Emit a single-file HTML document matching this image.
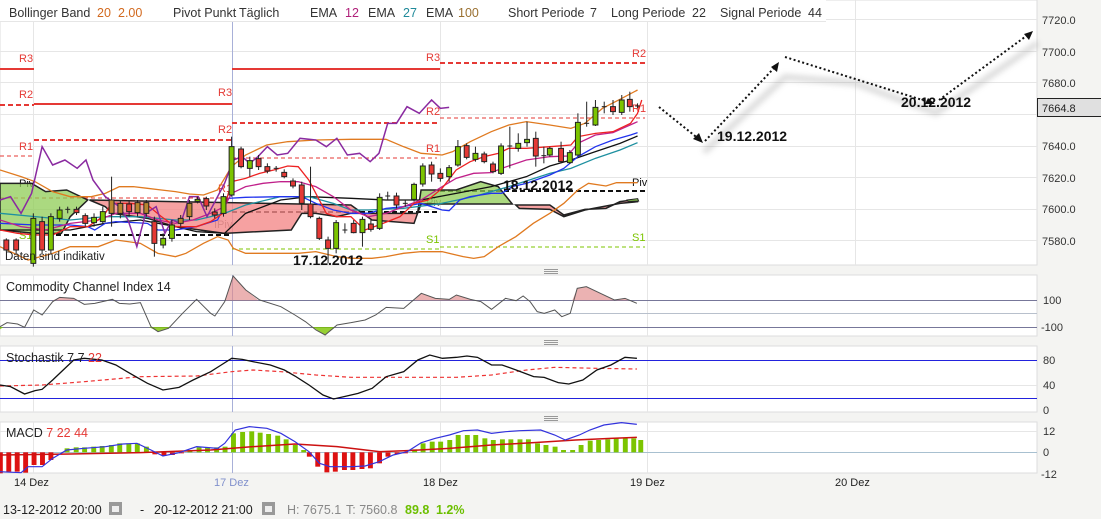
<!DOCTYPE html>
<html><head><meta charset="utf-8"><style>
html,body{margin:0;padding:0;background:#f4f4f2;}
svg{display:block;font-family:"Liberation Sans",sans-serif;}
.ns{vector-effect:non-scaling-stroke;}
</style></head><body>
<svg width="1101" height="519" viewBox="0 0 1101 519" xmlns="http://www.w3.org/2000/svg">
<defs><filter id="bl" x="-10%" y="-50%" width="120%" height="200%"><feGaussianBlur stdDeviation="3"/></filter></defs>
<rect x="0" y="0" width="1101" height="519" fill="#f4f4f2"/>
<!-- main panel -->
<rect x="0" y="0" width="1037" height="265" fill="#fff" stroke="#ddd"/>
<g stroke="#e6e6e6" stroke-width="1">
<line x1="0" y1="19.5" x2="1037" y2="19.5"/><line x1="0" y1="51.5" x2="1037" y2="51.5"/><line x1="0" y1="82.5" x2="1037" y2="82.5"/><line x1="0" y1="114.5" x2="1037" y2="114.5"/><line x1="0" y1="146.5" x2="1037" y2="146.5"/><line x1="0" y1="177.5" x2="1037" y2="177.5"/><line x1="0" y1="209.5" x2="1037" y2="209.5"/><line x1="0" y1="240.5" x2="1037" y2="240.5"/>
<line x1="33.5" y1="0" x2="33.5" y2="265"/><line x1="440.5" y1="0" x2="440.5" y2="265"/><line x1="647.5" y1="0" x2="647.5" y2="265"/><line x1="855.5" y1="0" x2="855.5" y2="265"/>
</g>
<line x1="232.5" y1="0" x2="232.5" y2="265" stroke="#a8b0d8"/>
<!-- header -->
<rect x="0" y="0" width="826" height="21" fill="#fff"/>
<line x1="0" y1="21.5" x2="826" y2="21.5" stroke="#e6e6e6"/>
<g font-size="12.5" fill="#333">
<text x="9" y="17">Bollinger Band</text><text x="97" y="17" fill="#d2691e">20</text><text x="118" y="17" fill="#d2691e">2.00</text>
<text x="173" y="17">Pivot Punkt</text><text x="239" y="17">Täglich</text>
<text x="310" y="17">EMA</text><text x="345" y="17" fill="#b0207a">12</text>
<text x="368" y="17">EMA</text><text x="403" y="17" fill="#208a9a">27</text>
<text x="426" y="17">EMA</text><text x="458" y="17" fill="#9a7030">100</text>
<text x="508" y="17">Short Periode</text><text x="590" y="17">7</text>
<text x="611" y="17">Long Periode</text><text x="692" y="17">22</text>
<text x="720" y="17">Signal Periode</text><text x="808" y="17">44</text>
</g>
<!-- pivot lines -->
<g stroke-width="2" fill="none">
<line x1="0" y1="69" x2="34" y2="69" stroke="#e53935"/>
<line x1="0" y1="105" x2="34" y2="105" stroke="#e53935" stroke-dasharray="5,3"/>
<line x1="0" y1="156" x2="34" y2="156" stroke="#e53935" stroke-width="1" stroke-dasharray="4,3"/>
<line x1="34" y1="104" x2="232" y2="104" stroke="#e53935"/>
<line x1="34" y1="140" x2="232" y2="140" stroke="#e53935" stroke-dasharray="5,3"/>
<line x1="0" y1="198" x2="232" y2="198" stroke="#e53935" stroke-width="1" stroke-dasharray="4,3"/>
<line x1="56" y1="235" x2="230" y2="235" stroke="#111" stroke-dasharray="5,3"/>
<line x1="232" y1="69" x2="440" y2="69" stroke="#e53935"/>
<line x1="232" y1="123" x2="437" y2="123" stroke="#e53935" stroke-dasharray="5,3"/>
<line x1="232" y1="158" x2="437" y2="158" stroke="#e53935" stroke-width="1" stroke-dasharray="4,3"/>
<line x1="232" y1="212" x2="437" y2="212" stroke="#111" stroke-dasharray="5,3"/>
<line x1="232" y1="249" x2="440" y2="249" stroke="#7cc400" stroke-width="1" stroke-dasharray="4,3"/>
<line x1="440" y1="63" x2="645" y2="63" stroke="#e53935" stroke-dasharray="5,3"/>
<line x1="440" y1="118" x2="645" y2="118" stroke="#e53935" stroke-width="1" stroke-dasharray="4,3"/>
<line x1="440" y1="191" x2="645" y2="191" stroke="#111" stroke-dasharray="5,3"/>
<line x1="440" y1="247" x2="645" y2="247" stroke="#7cc400" stroke-width="1" stroke-dasharray="4,3"/>
</g>
<g font-size="11">
<text x="19" y="62" fill="#e53935">R3</text><text x="19" y="98" fill="#e53935">R2</text><text x="19" y="150" fill="#e53935">R1</text><text x="19" y="187" fill="#111">Piv</text><text x="19" y="239" fill="#7cc400">S1</text>
<text x="218" y="96" fill="#e53935">R3</text><text x="218" y="133" fill="#e53935">R2</text><text x="218" y="192" fill="#e53935">R1</text><text x="214" y="228" fill="#777">IPiv</text>
<text x="426" y="61" fill="#e53935">R3</text><text x="426" y="115" fill="#e53935">R2</text><text x="426" y="152" fill="#e53935">R1</text><text x="426" y="206" fill="#777">Piv</text><text x="426" y="243" fill="#7cc400">S1</text>
<text x="632" y="57" fill="#e53935">R2</text><text x="632" y="112" fill="#e53935">R1</text><text x="632" y="186" fill="#111">Piv</text><text x="632" y="241" fill="#7cc400">S1</text>
</g>
<!-- chart in zoom coords -->
<g transform="scale(0.35088,0.33333)">
<polygon fill="#8fcc55" fill-opacity="0.75" stroke="#222" stroke-width="1.5" class="ns" points="0,550 90,550 130,575 190,570 250,600 230,620 200,650 175,700 140,700 100,700 50,695 0,690"/>
<polygon fill="#f48a8a" fill-opacity="0.8" stroke="#222" stroke-width="1.5" class="ns" points="255,600 1000,615 1060,660 1180,670 1190,640 1000,640 960,650 900,640 860,640 830,690 640,700 500,680 420,655 320,640 300,620"/>
<polygon fill="#8fcc55" fill-opacity="0.75" stroke="#222" stroke-width="1.5" class="ns" points="1190,640 1200,570 1300,570 1370,545 1420,560 1460,612 1300,612 1200,612"/>
<polygon fill="#f48a8a" fill-opacity="0.8" stroke="#222" stroke-width="1.5" class="ns" points="1470,615 1567,615 1607,645 1667,628 1727,625 1767,605 1817,598 1817,605 1767,610 1667,630 1607,650 1567,628 1480,625"/>
<polygon fill="#8fcc55" stroke="#222" stroke-width="1" class="ns" points="1787,600 1817,596 1820,603 1790,604"/>
<g fill="none" stroke-width="1.3" class="ns">
<polyline class="ns" stroke="#e07a20" points="0,510 60,530 100,545 150,575 200,590 260,590 300,580 340,560 380,560 420,565 460,570 500,575 540,582 580,585 620,570 660,500 700,465 760,435 820,425 900,420 1000,418 1100,418 1150,440 1200,460 1260,465 1290,455 1340,425 1400,395 1450,375 1500,365 1567,375 1627,385 1667,370 1717,325 1767,298 1817,270"/>
<polyline class="ns" stroke="#e07a20" points="0,740 40,760 80,780 150,760 200,740 280,740 330,720 400,730 450,760 500,770 530,760 580,730 620,710 650,720 665,745 700,760 760,760 850,760 900,755 960,770 1000,775 1060,775 1100,770 1150,760 1200,755 1260,755 1320,770 1350,775 1380,770 1420,740 1470,710 1520,670 1567,640 1607,610 1647,570 1677,550 1727,558 1757,548 1817,548"/>
<polyline class="ns" stroke="#111" points="0,690 100,690 200,690 300,670 400,660 500,680 560,695 640,700 700,640 800,600 880,590 1000,595 1100,600 1200,600 1300,580 1400,560 1500,530 1567,498 1627,480 1697,455 1767,430 1817,408"/>
<polyline class="ns" stroke="#1e90a0" points="0,640 100,650 200,660 300,650 400,650 500,660 560,660 640,640 700,615 800,590 880,590 950,610 1000,630 1050,630 1150,625 1250,612 1350,590 1450,560 1567,520 1627,505 1697,475 1767,450 1817,428"/>
<polyline class="ns" stroke="#2233ee" points="0,670 100,675 200,675 250,680 270,690 300,670 330,665 420,670 450,690 500,690 560,680 620,660 650,595 700,592 800,590 860,590 900,610 950,630 1000,640 1050,640 1100,625 1150,620 1200,610 1260,630 1280,632 1310,600 1340,590 1400,580 1430,580 1460,560 1500,550 1567,525 1607,505 1647,470 1697,440 1747,420 1797,405 1817,398"/>
<polyline class="ns" stroke="#c0208a" points="0,660 60,680 130,690 200,670 280,660 330,640 400,640 450,660 500,670 550,660 600,640 640,620 660,580 700,560 750,550 800,545 850,545 900,560 950,590 1000,630 1050,650 1100,640 1150,620 1200,600 1260,560 1300,535 1350,520 1400,518 1430,505 1500,480 1567,470 1617,468 1647,430 1697,405 1747,398 1817,365"/>
<polyline class="ns" stroke="#ee2222" points="0,690 50,700 100,705 150,705 200,680 250,680 280,660 300,640 318,610 370,610 420,615 460,650 500,680 540,680 560,680 600,665 635,640 660,545 700,535 740,520 780,510 820,498 850,500 880,540 900,580 930,640 960,650 1000,650 1040,690 1080,675 1140,650 1180,610 1220,600 1260,565 1300,510 1340,485 1380,470 1420,460 1450,445 1500,445 1567,440 1627,435 1647,410 1697,400 1747,395 1777,380 1797,370 1817,340 1829,300"/>
<polyline class="ns" stroke="#8a2aa0" stroke-width="1.5" points="0,600 30,590 60,640 90,580 120,440 150,495 185,480 220,505 245,480 265,540 300,590 340,620 365,660 390,740 415,640 445,620 470,700 490,660 515,670 540,590 565,590 590,650 615,600 640,550 665,480 690,470 712,490 735,470 762,440 790,465 820,460 855,415 900,420 930,440 960,415 990,465 1025,460 1055,485 1080,460 1105,370 1130,370 1160,320 1195,340 1230,300 1255,325 1280,322"/>
</g>
<g stroke="#222" stroke-width="1" class="ns">
<line class="ns" x1="18" y1="715" x2="18" y2="755"/><rect class="ns" x="11" y="720" width="14" height="30" fill="#e53935"/>
<line class="ns" x1="46" y1="715" x2="46" y2="760"/><rect class="ns" x="39" y="720" width="14" height="30" fill="#e53935"/>
<line class="ns" x1="95" y1="640" x2="95" y2="800"/><rect class="ns" x="88" y="655" width="14" height="135" fill="#7cc400"/>
<line class="ns" x1="120" y1="650" x2="120" y2="760"/><rect class="ns" x="113" y="665" width="14" height="85" fill="#e53935"/>
<line class="ns" x1="145" y1="640" x2="145" y2="760"/><rect class="ns" x="138" y="650" width="14" height="100" fill="#7cc400"/>
<line class="ns" x1="170" y1="620" x2="170" y2="665"/><rect class="ns" x="163" y="630" width="14" height="25" fill="#7cc400"/>
<line class="ns" x1="193" y1="620" x2="193" y2="640"/><line class="ns" x1="186" y1="628" x2="200" y2="628"/>
<line class="ns" x1="218" y1="620" x2="218" y2="645"/><rect class="ns" x="211" y="628" width="14" height="10" fill="#e53935"/>
<line class="ns" x1="243" y1="640" x2="243" y2="680"/><rect class="ns" x="236" y="647" width="14" height="23" fill="#e53935"/>
<line class="ns" x1="268" y1="640" x2="268" y2="680"/><rect class="ns" x="261" y="652" width="14" height="16" fill="#7cc400"/>
<line class="ns" x1="293" y1="620" x2="293" y2="670"/><rect class="ns" x="286" y="635" width="14" height="30" fill="#7cc400"/>
<line class="ns" x1="318" y1="530" x2="318" y2="680"/><rect class="ns" x="311" y="600" width="14" height="40" fill="#b8862e"/>
<line class="ns" x1="343" y1="600" x2="343" y2="655"/><rect class="ns" x="336" y="610" width="14" height="30" fill="#b8862e"/>
<line class="ns" x1="368" y1="600" x2="368" y2="650"/><rect class="ns" x="361" y="612" width="14" height="23" fill="#e53935"/>
<line class="ns" x1="392" y1="600" x2="392" y2="650"/><rect class="ns" x="385" y="608" width="14" height="30" fill="#b8862e"/>
<line class="ns" x1="417" y1="600" x2="417" y2="650"/><rect class="ns" x="410" y="608" width="14" height="32" fill="#b8862e"/>
<line class="ns" x1="440" y1="650" x2="440" y2="770"/><rect class="ns" x="433" y="665" width="14" height="65" fill="#e53935"/>
<line class="ns" x1="465" y1="700" x2="465" y2="745"/><rect class="ns" x="458" y="715" width="14" height="20" fill="#7cc400"/>
<line class="ns" x1="490" y1="660" x2="490" y2="725"/><rect class="ns" x="483" y="675" width="14" height="40" fill="#7cc400"/>
<line class="ns" x1="515" y1="645" x2="515" y2="680"/><rect class="ns" x="508" y="655" width="14" height="15" fill="#b8862e"/>
<line class="ns" x1="540" y1="600" x2="540" y2="660"/><rect class="ns" x="533" y="610" width="14" height="40" fill="#b8862e"/>
<line class="ns" x1="563" y1="590" x2="563" y2="610"/><rect class="ns" x="556" y="598" width="14" height="6" fill="#7cc400"/>
<line class="ns" x1="588" y1="590" x2="588" y2="630"/><rect class="ns" x="581" y="596" width="14" height="22" fill="#e53935"/>
<line class="ns" x1="612" y1="625" x2="612" y2="655"/><rect class="ns" x="605" y="636" width="14" height="9" fill="#e53935"/>
<line class="ns" x1="637" y1="580" x2="637" y2="650"/><rect class="ns" x="630" y="590" width="14" height="50" fill="#7cc400"/>
<line class="ns" x1="660" y1="410" x2="660" y2="590"/><rect class="ns" x="653" y="440" width="14" height="145" fill="#7cc400"/>
<line class="ns" x1="687" y1="440" x2="687" y2="505"/><rect class="ns" x="680" y="447" width="14" height="53" fill="#e53935"/>
<line class="ns" x1="712" y1="470" x2="712" y2="530"/><rect class="ns" x="705" y="482" width="14" height="23" fill="#7cc400"/>
<line class="ns" x1="737" y1="465" x2="737" y2="510"/><rect class="ns" x="730" y="476" width="14" height="24" fill="#e53935"/>
<line class="ns" x1="762" y1="490" x2="762" y2="520"/><rect class="ns" x="755" y="500" width="14" height="13" fill="#e53935"/>
<line class="ns" x1="787" y1="498" x2="787" y2="515"/><line class="ns" x1="780" y1="505" x2="794" y2="505"/>
<line class="ns" x1="810" y1="508" x2="810" y2="535"/><rect class="ns" x="803" y="517" width="14" height="13" fill="#e53935"/>
<line class="ns" x1="835" y1="535" x2="835" y2="565"/><rect class="ns" x="828" y="543" width="14" height="15" fill="#e53935"/>
<line class="ns" x1="860" y1="545" x2="860" y2="630"/><rect class="ns" x="853" y="555" width="14" height="55" fill="#e53935"/>
<line class="ns" x1="885" y1="500" x2="885" y2="655"/><rect class="ns" x="878" y="612" width="14" height="38" fill="#e53935"/>
<line class="ns" x1="910" y1="650" x2="910" y2="720"/><rect class="ns" x="903" y="655" width="14" height="60" fill="#e53935"/>
<line class="ns" x1="935" y1="710" x2="935" y2="790"/><rect class="ns" x="928" y="720" width="14" height="25" fill="#e53935"/>
<line class="ns" x1="958" y1="660" x2="958" y2="760"/><rect class="ns" x="951" y="668" width="14" height="77" fill="#7cc400"/>
<line class="ns" x1="983" y1="670" x2="983" y2="700"/><line class="ns" x1="976" y1="690" x2="990" y2="690"/>
<line class="ns" x1="1008" y1="660" x2="1008" y2="700"/><rect class="ns" x="1001" y="670" width="14" height="28" fill="#e53935"/>
<line class="ns" x1="1033" y1="650" x2="1033" y2="740"/><rect class="ns" x="1026" y="658" width="14" height="40" fill="#7cc400"/>
<line class="ns" x1="1057" y1="660" x2="1057" y2="695"/><rect class="ns" x="1050" y="672" width="14" height="16" fill="#e53935"/>
<line class="ns" x1="1082" y1="580" x2="1082" y2="690"/><rect class="ns" x="1075" y="592" width="14" height="93" fill="#7cc400"/>
<line class="ns" x1="1105" y1="575" x2="1105" y2="600"/><line class="ns" x1="1098" y1="588" x2="1112" y2="588"/>
<line class="ns" x1="1130" y1="578" x2="1130" y2="625"/><rect class="ns" x="1123" y="588" width="14" height="27" fill="#e53935"/>
<line class="ns" x1="1155" y1="600" x2="1155" y2="620"/><line class="ns" x1="1148" y1="610" x2="1162" y2="610"/>
<line class="ns" x1="1180" y1="548" x2="1180" y2="605"/><rect class="ns" x="1173" y="553" width="14" height="45" fill="#7cc400"/>
<line class="ns" x1="1205" y1="490" x2="1205" y2="560"/><rect class="ns" x="1198" y="498" width="14" height="54" fill="#7cc400"/>
<line class="ns" x1="1230" y1="485" x2="1230" y2="545"/><rect class="ns" x="1223" y="495" width="14" height="27" fill="#e53935"/>
<line class="ns" x1="1255" y1="505" x2="1255" y2="545"/><rect class="ns" x="1248" y="520" width="14" height="15" fill="#e53935"/>
<line class="ns" x1="1280" y1="495" x2="1280" y2="545"/><rect class="ns" x="1273" y="503" width="14" height="27" fill="#7cc400"/>
<line class="ns" x1="1305" y1="420" x2="1305" y2="500"/><rect class="ns" x="1298" y="440" width="14" height="55" fill="#7cc400"/>
<line class="ns" x1="1330" y1="430" x2="1330" y2="478"/><rect class="ns" x="1323" y="437" width="14" height="35" fill="#e53935"/>
<line class="ns" x1="1355" y1="440" x2="1355" y2="485"/><rect class="ns" x="1348" y="460" width="14" height="18" fill="#7cc400"/>
<line class="ns" x1="1380" y1="455" x2="1380" y2="490"/><rect class="ns" x="1373" y="462" width="14" height="23" fill="#e53935"/>
<line class="ns" x1="1405" y1="485" x2="1405" y2="520"/><rect class="ns" x="1398" y="492" width="14" height="23" fill="#e53935"/>
<line class="ns" x1="1428" y1="430" x2="1428" y2="525"/><rect class="ns" x="1421" y="438" width="14" height="82" fill="#7cc400"/>
<line class="ns" x1="1453" y1="380" x2="1453" y2="505"/><line class="ns" x1="1446" y1="438" x2="1460" y2="438"/>
<line class="ns" x1="1477" y1="400" x2="1477" y2="455"/><rect class="ns" x="1470" y="430" width="14" height="15" fill="#7cc400"/>
<line class="ns" x1="1502" y1="365" x2="1502" y2="440"/><rect class="ns" x="1495" y="418" width="14" height="10" fill="#7cc400"/>
<line class="ns" x1="1527" y1="395" x2="1527" y2="500"/><rect class="ns" x="1520" y="415" width="14" height="53" fill="#e53935"/>
<line class="ns" x1="1550" y1="440" x2="1550" y2="490"/><line class="ns" x1="1543" y1="467" x2="1557" y2="467"/>
<line class="ns" x1="1567" y1="440" x2="1567" y2="470"/><rect class="ns" x="1560" y="445" width="14" height="20" fill="#7cc400"/>
<line class="ns" x1="1599" y1="425" x2="1599" y2="490"/><rect class="ns" x="1592" y="445" width="14" height="40" fill="#e53935"/>
<line class="ns" x1="1624" y1="450" x2="1624" y2="492"/><rect class="ns" x="1617" y="458" width="14" height="30" fill="#7cc400"/>
<line class="ns" x1="1647" y1="340" x2="1647" y2="470"/><rect class="ns" x="1640" y="367" width="14" height="98" fill="#7cc400"/>
<line class="ns" x1="1672" y1="305" x2="1672" y2="380"/><line class="ns" x1="1665" y1="370" x2="1679" y2="370"/>
<line class="ns" x1="1697" y1="300" x2="1697" y2="378"/><rect class="ns" x="1690" y="322" width="14" height="53" fill="#7cc400"/>
<line class="ns" x1="1722" y1="305" x2="1722" y2="340"/><line class="ns" x1="1715" y1="320" x2="1729" y2="320"/>
<line class="ns" x1="1747" y1="300" x2="1747" y2="345"/><rect class="ns" x="1740" y="320" width="14" height="15" fill="#e53935"/>
<line class="ns" x1="1772" y1="285" x2="1772" y2="345"/><rect class="ns" x="1765" y="300" width="14" height="37" fill="#7cc400"/>
<line class="ns" x1="1795" y1="275" x2="1795" y2="335"/><rect class="ns" x="1788" y="298" width="14" height="22" fill="#e53935"/>
<line class="ns" x1="1817" y1="310" x2="1817" y2="325"/><line class="ns" x1="1810" y1="318" x2="1824" y2="318"/>
</g>
</g>
<text x="5" y="260" font-size="11.5" fill="#222">Daten sind indikativ</text>
<!-- annotations -->
<polyline points="704,152 785,77 855,83 936,113 1038,43" fill="none" stroke="#999" stroke-width="6" opacity="0.35" filter="url(#bl)"/>
<g fill="none" stroke="#111" stroke-width="2" stroke-dasharray="2,2.5">
<line x1="659" y1="107" x2="700" y2="140"/><line x1="705" y1="141" x2="776" y2="66"/><line x1="785" y1="57" x2="932" y2="103"/><line x1="939" y1="100" x2="1029" y2="34"/>
</g>
<g fill="#111"><polygon points="703,143 693,139 699,133"/><polygon points="779,62 777,72 771,67"/><polygon points="1033,31 1029,40 1024,34"/><polygon points="935,104 925,104 928,98"/></g>
<g font-size="14" font-weight="bold" fill="#111">
<text x="717" y="141">19.12.2012</text><text x="901" y="107">20.12.2012</text><text x="503" y="190">18.12.2012</text><text x="293" y="265">17.12.2012</text>
</g>
<!-- right axis -->
<g font-size="11" fill="#333">
<text x="1042" y="24">7720.0</text><text x="1042" y="56">7700.0</text><text x="1042" y="87">7680.0</text><text x="1042" y="150">7640.0</text><text x="1042" y="182">7620.0</text><text x="1042" y="213">7600.0</text><text x="1042" y="245">7580.0</text>
</g>
<rect x="1037.5" y="98.5" width="64" height="18" fill="#e0e0e0" stroke="#222"/>
<text x="1042" y="112" font-size="11" fill="#222">7664.8</text>
<!-- handles -->
<g stroke="#999" stroke-width="1"><line x1="544" y1="269.5" x2="558" y2="269.5"/><line x1="544" y1="271.5" x2="558" y2="271.5"/><line x1="544" y1="273.5" x2="558" y2="273.5"/>
<line x1="544" y1="340.5" x2="558" y2="340.5"/><line x1="544" y1="342.5" x2="558" y2="342.5"/><line x1="544" y1="344.5" x2="558" y2="344.5"/>
<line x1="544" y1="416.5" x2="558" y2="416.5"/><line x1="544" y1="418.5" x2="558" y2="418.5"/><line x1="544" y1="420.5" x2="558" y2="420.5"/></g>
<!-- CCI -->
<rect x="0" y="275" width="1037" height="61" fill="#fff" stroke="#ddd"/>
<g stroke="#e6e6e6"><line x1="33.5" y1="275" x2="33.5" y2="336"/><line x1="440.5" y1="275" x2="440.5" y2="336"/><line x1="647.5" y1="275" x2="647.5" y2="336"/></g>
<line x1="232.5" y1="275" x2="232.5" y2="336" stroke="#a8b0d8"/>
<line x1="0" y1="300.5" x2="1037" y2="300.5" stroke="#777799"/><line x1="0" y1="313.5" x2="1037" y2="313.5" stroke="#b8c0cc"/><line x1="0" y1="327.5" x2="1037" y2="327.5" stroke="#777799"/>
<g transform="translate(0,270) scale(0.7022,0.33333)">
<g fill="#e08888" fill-opacity="0.65"><polygon points="320,91 332,18 350,60 368,91"/><polygon points="590,91 600,70 620,85 640,88 650,75 670,88 680,91"/><polygon points="815,91 822,55 835,50 855,70 875,90 890,85 895,91"/><polygon points="75,91 85,82 105,85 110,91"/></g>
<g fill="#7cc400" fill-opacity="0.8"><polygon points="212,171 225,185 240,175 243,171"/><polygon points="445,171 463,195 478,171"/><polygon points="0,171 5,171 0,178"/></g>
<polyline class="ns" fill="none" stroke="#555" stroke-width="1" points="0,170 10,158 25,162 35,172 48,120 60,135 75,95 85,82 105,85 120,103 135,100 160,88 170,100 185,102 200,98 215,170 225,185 240,175 260,130 280,88 300,130 306,138 320,95 332,18 350,60 370,90 400,110 420,135 435,155 450,180 463,195 480,165 500,158 520,150 535,135 550,112 575,115 600,70 620,85 640,88 650,75 670,88 685,95 700,118 720,85 735,92 745,78 755,95 765,125 775,130 790,120 800,140 812,130 822,55 835,50 855,70 875,90 890,85 907,100"/>
</g>
<text x="6" y="291" font-size="12.5" fill="#222">Commodity Channel Index  14</text>
<text x="1043" y="304" font-size="11" fill="#333">100</text><text x="1041" y="331" font-size="11" fill="#333">-100</text>
<!-- Stoch -->
<rect x="0" y="346" width="1037" height="66" fill="#fff" stroke="#ddd"/>
<g stroke="#e6e6e6"><line x1="33.5" y1="346" x2="33.5" y2="412"/><line x1="440.5" y1="346" x2="440.5" y2="412"/><line x1="647.5" y1="346" x2="647.5" y2="412"/><line x1="0" y1="385.5" x2="1037" y2="385.5"/></g>
<line x1="232.5" y1="346" x2="232.5" y2="412" stroke="#a8b0d8"/>
<line x1="0" y1="360.5" x2="1037" y2="360.5" stroke="#2222dd"/><line x1="0" y1="398.5" x2="1037" y2="398.5" stroke="#2222dd"/>
<g transform="translate(0,270) scale(0.7022,0.33333)" fill="none">
<polyline class="ns" stroke="#ee3333" stroke-width="1.2" stroke-dasharray="4,3" points="0,348 60,345 120,335 200,320 280,318 330,305 360,300 400,305 450,315 500,322 550,322 650,322 700,315 750,300 790,292 850,295 907,297"/>
<polyline class="ns" stroke="#111" stroke-width="1.3" points="0,345 15,350 35,372 50,362 60,358 75,330 90,300 105,270 120,265 145,270 165,285 185,310 210,340 232,360 255,352 275,330 300,305 315,285 330,265 345,268 360,275 385,285 405,300 420,318 440,345 460,375 475,387 490,380 510,370 530,355 550,320 575,305 595,270 612,255 630,265 650,262 665,258 680,262 700,285 715,285 735,300 760,320 775,322 795,338 810,342 830,330 850,300 870,285 890,262 907,265"/>
</g>
<text x="6" y="362" font-size="12.5" fill="#222">Stochastik  7  7  <tspan fill="#e53935">22</tspan></text>
<text x="1043" y="364" font-size="11" fill="#333">80</text><text x="1043" y="389" font-size="11" fill="#333">40</text><text x="1043" y="414" font-size="11" fill="#333">0</text>
<!-- MACD -->
<rect x="0" y="422" width="1037" height="51" fill="#fff" stroke="#ddd"/>
<g stroke="#e6e6e6"><line x1="33.5" y1="422" x2="33.5" y2="473"/><line x1="440.5" y1="422" x2="440.5" y2="473"/><line x1="647.5" y1="422" x2="647.5" y2="473"/><line x1="0" y1="431.5" x2="1037" y2="431.5"/></g>
<line x1="232.5" y1="422" x2="232.5" y2="473" stroke="#a8b0d8"/>
<line x1="0" y1="452.5" x2="1037" y2="452.5" stroke="#a8c0d0"/>
<g transform="translate(0,270) scale(0.7022,0.33333)">
<g fill="#dd1111">
<rect x="-3" y="547" width="7" height="63"/><rect x="9" y="547" width="7" height="58"/><rect x="21" y="547" width="7" height="58"/><rect x="33" y="547" width="7" height="61"/><rect x="45" y="547" width="7" height="38"/><rect x="57" y="547" width="7" height="38"/><rect x="69" y="547" width="7" height="23"/>
<rect x="217" y="547" width="7" height="6"/><rect x="230" y="547" width="7" height="10"/><rect x="242" y="547" width="7" height="8"/><rect x="255" y="547" width="7" height="3"/>
<rect x="437" y="547" width="7" height="13"/><rect x="449" y="547" width="7" height="43"/><rect x="462" y="547" width="7" height="60"/><rect x="474" y="547" width="7" height="58"/><rect x="487" y="547" width="7" height="53"/><rect x="499" y="547" width="7" height="53"/><rect x="512" y="547" width="7" height="50"/><rect x="524" y="547" width="7" height="48"/><rect x="537" y="547" width="7" height="33"/><rect x="549" y="547" width="7" height="13"/><rect x="562" y="547" width="7" height="5"/><rect x="574" y="547" width="7" height="3"/>
</g>
<g fill="#7cc400">
<rect x="92" y="535" width="7" height="12"/><rect x="105" y="532" width="7" height="15"/><rect x="117" y="532" width="7" height="15"/><rect x="130" y="530" width="7" height="17"/><rect x="142" y="528" width="7" height="19"/><rect x="155" y="525" width="7" height="22"/><rect x="167" y="520" width="7" height="27"/><rect x="180" y="520" width="7" height="27"/><rect x="192" y="520" width="7" height="27"/><rect x="205" y="530" width="7" height="17"/>
<rect x="267" y="540" width="7" height="7"/><rect x="280" y="532" width="7" height="15"/><rect x="292" y="532" width="7" height="15"/><rect x="305" y="532" width="7" height="15"/><rect x="317" y="530" width="7" height="17"/><rect x="329" y="490" width="7" height="57"/><rect x="342" y="486" width="7" height="61"/><rect x="355" y="484" width="7" height="63"/><rect x="367" y="488" width="7" height="59"/><rect x="379" y="492" width="7" height="55"/><rect x="392" y="497" width="7" height="50"/><rect x="404" y="508" width="7" height="39"/><rect x="417" y="525" width="7" height="22"/><rect x="429" y="540" width="7" height="7"/>
<rect x="587" y="538" width="7" height="9"/><rect x="599" y="520" width="7" height="27"/><rect x="612" y="515" width="7" height="32"/><rect x="624" y="515" width="7" height="32"/><rect x="637" y="510" width="7" height="37"/><rect x="649" y="495" width="7" height="52"/><rect x="662" y="495" width="7" height="52"/><rect x="674" y="495" width="7" height="52"/><rect x="687" y="505" width="7" height="42"/><rect x="699" y="510" width="7" height="37"/><rect x="712" y="508" width="7" height="39"/><rect x="724" y="508" width="7" height="39"/><rect x="737" y="508" width="7" height="39"/><rect x="749" y="508" width="7" height="39"/><rect x="762" y="520" width="7" height="27"/><rect x="774" y="525" width="7" height="22"/><rect x="787" y="530" width="7" height="17"/><rect x="799" y="540" width="7" height="7"/><rect x="812" y="540" width="7" height="7"/><rect x="824" y="525" width="7" height="22"/><rect x="837" y="512" width="7" height="35"/><rect x="849" y="510" width="7" height="37"/><rect x="862" y="508" width="7" height="39"/><rect x="874" y="505" width="7" height="42"/><rect x="887" y="505" width="7" height="42"/><rect x="899" y="505" width="7" height="42"/><rect x="909" y="510" width="7" height="37"/>
</g>
<polyline class="ns" fill="none" stroke="#cc1111" stroke-width="1.5" points="0,555 100,552 200,548 300,540 360,530 420,522 480,530 540,545 580,542 640,535 700,525 760,518 820,510 870,505 907,502"/>
<polyline class="ns" fill="none" stroke="#3333dd" stroke-width="1.2" points="0,605 30,608 40,590 60,590 75,565 95,540 120,535 150,530 175,522 195,520 215,540 232,558 255,548 280,530 310,535 320,520 335,480 355,470 380,475 400,490 420,515 440,545 455,580 470,590 500,590 520,588 540,575 560,555 580,545 600,518 620,505 640,495 660,482 680,480 700,490 720,485 740,482 770,480 790,495 805,510 825,495 840,480 860,465 885,458 907,463"/>
</g>
<text x="6" y="437" font-size="12.5" fill="#222">MACD  <tspan fill="#e53935">7  22  44</tspan></text>
<text x="1043" y="435" font-size="11" fill="#333">12</text><text x="1043" y="456" font-size="11" fill="#333">0</text><text x="1041" y="478" font-size="11" fill="#333">-12</text>
<!-- x labels -->
<g font-size="11" fill="#222">
<text x="14" y="486">14 Dez</text><text x="214" y="486" fill="#8090cc">17 Dez</text><text x="423" y="486">18 Dez</text><text x="630" y="486">19 Dez</text><text x="835" y="486">20 Dez</text>
</g>
<!-- bottom bar -->
<g font-size="12.5">
<text x="3" y="514" fill="#222">13-12-2012 20:00</text>
<text x="140" y="514" fill="#222">-</text>
<text x="154" y="514" fill="#222">20-12-2012 21:00</text>
<text x="287" y="514" fill="#888">H: 7675.1</text>
<text x="346" y="514" fill="#888">T: 7560.8</text>
<text x="405" y="514" fill="#6cbf00" font-weight="bold">89.8</text>
<text x="436" y="514" fill="#6cbf00" font-weight="bold">1.2%</text>
</g>
<g fill="#999"><rect x="109" y="502" width="13" height="13"/><rect x="262" y="502" width="13" height="13"/></g>
<g fill="#eee"><rect x="112" y="506" width="7" height="6"/><rect x="265" y="506" width="7" height="6"/></g>
</svg>
</body></html>
